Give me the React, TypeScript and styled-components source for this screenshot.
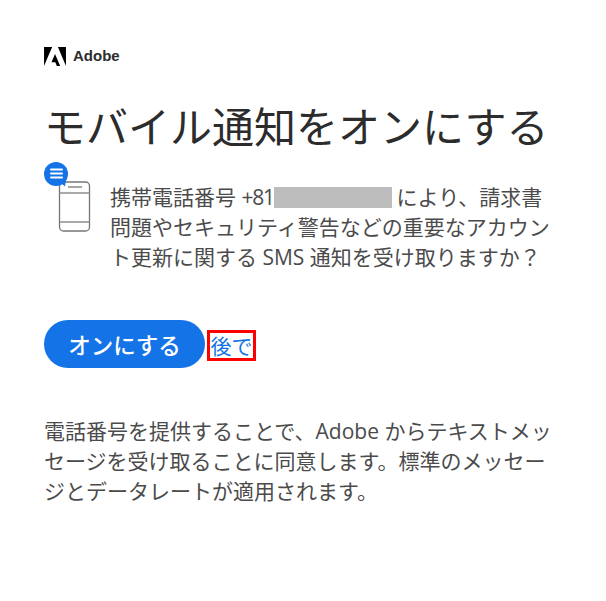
import styled, { createGlobalStyle } from 'styled-components'

const GlobalStyle = createGlobalStyle`
    html, body {
        margin: 0;
        padding: 0;
        background: #fff;
        font-family: "Open Sans", "Noto Sans CJK JP", sans-serif;
        color: #4b4b4b;
    }
`

const Page = styled.div`
    width: 606px;
    height: 601px;
    box-sizing: border-box;
    padding: 47px 44px 0 44px;
    overflow: hidden;
`

const Brand = styled.div`
    display: flex;
    align-items: center;
    gap: 7px;
    height: 18px;
`

const BrandName = styled.span`
    margin-top: -2px;
    font-family: "Liberation Sans", sans-serif;
    font-size: 15px;
    font-weight: 700;
    color: #2c2c2c;
`

const Title = styled.h1`
    margin: 34px 0 0 0;
    font-size: 42px;
    line-height: 56px;
    font-weight: 400;
    color: #2c2c2c;
    white-space: nowrap;
`

const Message = styled.div`
    display: flex;
    margin-top: 7px;
`

const PhoneIcon = styled.svg`
    flex: none;
    width: 48px;
    height: 72px;
`

const MessageText = styled.p`
    margin: 20px 0 0 18px;
    font-size: 21px;
    line-height: 30px;
    width: 445px;
`

const CountryCode = styled.span`
    letter-spacing: -1.3px;
`

const Redacted = styled.span`
    display: inline-block;
    width: 118px;
    height: 21px;
    margin: 0 5px 0 0;
    background: #bdbdbd;
    vertical-align: -3px;
`

const Actions = styled.div`
    display: flex;
    align-items: center;
    margin-top: 48px;
    gap: 2px;
`

const PrimaryButton = styled.button`
    width: 161px;
    height: 48px;
    padding: 0;
    border: 0;
    border-radius: 24px;
    background: #1473e6;
    color: #fff;
    font-family: inherit;
    font-size: 22.5px;
    font-weight: 500;
`

const LaterLink = styled.a`
    display: flex;
    align-items: center;
    justify-content: center;
    box-sizing: border-box;
    width: 49px;
    height: 31px;
    margin-top: 2px;
    border: 3px solid #f00;
    color: #1473e6;
    font-size: 21px;
    text-decoration: none;
`

const Notice = styled.p`
    margin: 48px 0 0 0;
    font-size: 21px;
    line-height: 30px;
    width: 515px;
`

export default function App() {
    return (
        <>
            <GlobalStyle />
            <Page>
                <Brand>
                    <svg width="22" height="19" viewBox="0 0 30 26" aria-hidden="true">
                        <path d="M19 0h11v26zM11.1 0H0v26zM15 9.6L22.1 26h-4.6l-2.1-5.2h-5.2z" fill="#000" />
                    </svg>
                    <BrandName>Adobe</BrandName>
                </Brand>
                <Title>モバイル通知をオンにする</Title>
                <Message>
                    <PhoneIcon viewBox="0 0 48 72" aria-hidden="true">
                        <rect x="15.5" y="20" width="30" height="49" rx="4" fill="#fff" stroke="#757575" strokeWidth="1.3" />
                        <path d="M15.5 31h30M15.5 60h30" stroke="#8e8e8e" strokeWidth="1.3" />
                        <path d="M24 25h14" stroke="#757575" strokeWidth="1.3" />
                        <circle cx="12" cy="12" r="12" fill="#1473e6" />
                        <path d="M17 21l4 3.5 1-7z" fill="#1473e6" />
                        <path d="M7 7.5h11M7 11.5h11M7 15.5h11" stroke="#fff" strokeWidth="2" strokeLinecap="round" />
                    </PhoneIcon>
                    <MessageText>
                        携帯電話番号 <CountryCode>+81</CountryCode><Redacted />により、請求書問題やセキュリティ警告などの重要なアカウント更新に関する SMS 通知を受け取りますか？
                    </MessageText>
                </Message>
                <Actions>
                    <PrimaryButton>オンにする</PrimaryButton>
                    <LaterLink href="#">後で</LaterLink>
                </Actions>
                <Notice>
                    電話番号を提供することで、Adobe からテキストメッセージを受け取ることに同意します。標準のメッセージとデータレートが適用されます。
                </Notice>
            </Page>
        </>
    )
}
